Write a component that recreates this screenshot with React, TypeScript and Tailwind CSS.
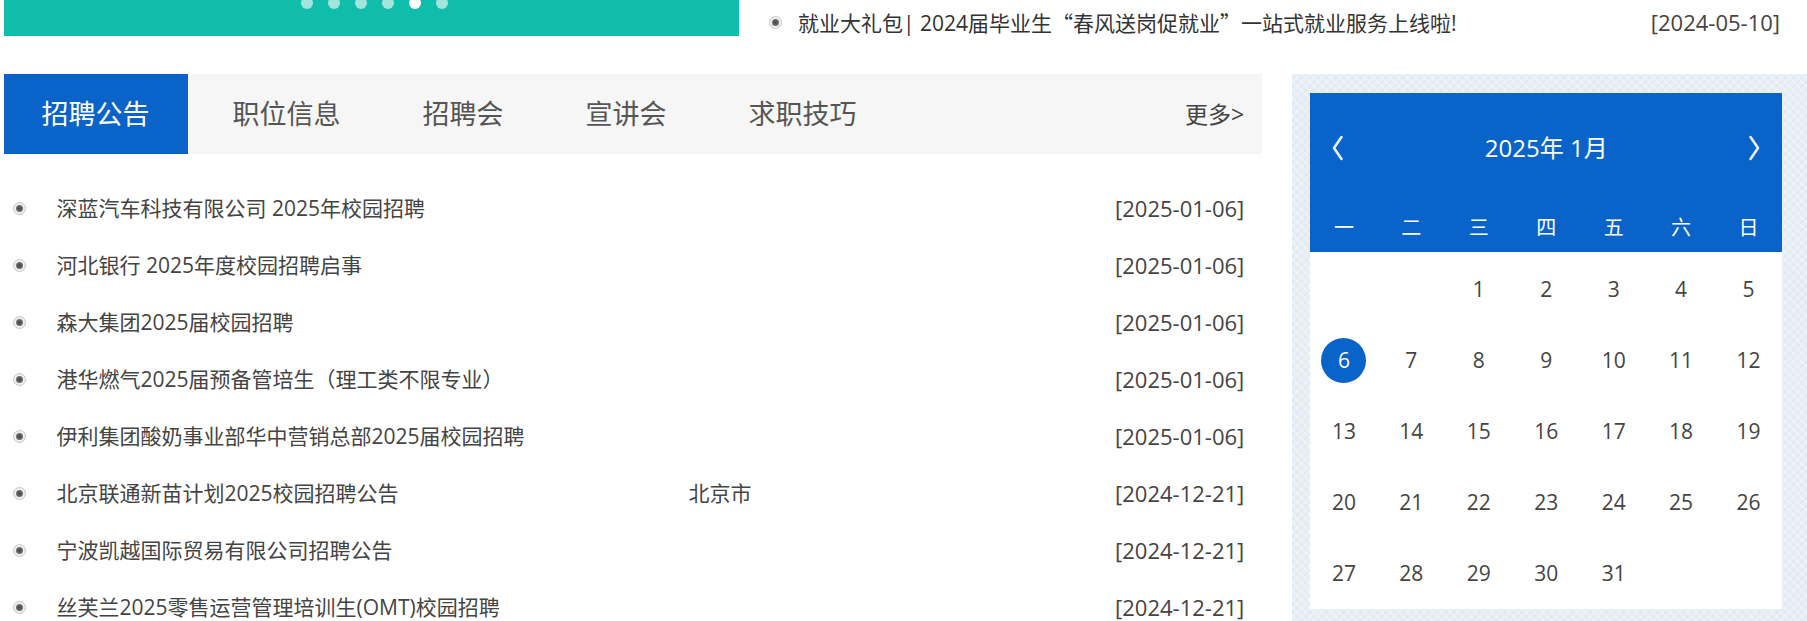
import React from "react";

const news = [
  { t: "深蓝汽车科技有限公司 2025年校园招聘", loc: "", d: "[2025-01-06]" },
  { t: "河北银行 2025年度校园招聘启事", loc: "", d: "[2025-01-06]" },
  { t: "森大集团2025届校园招聘", loc: "", d: "[2025-01-06]" },
  { t: "港华燃气2025届预备管培生（理工类不限专业）", loc: "", d: "[2025-01-06]" },
  { t: "伊利集团酸奶事业部华中营销总部2025届校园招聘", loc: "", d: "[2025-01-06]" },
  { t: "北京联通新苗计划2025校园招聘公告", loc: "北京市", d: "[2024-12-21]" },
  { t: "宁波凯越国际贸易有限公司招聘公告", loc: "", d: "[2024-12-21]" },
  { t: "丝芙兰2025零售运营管理培训生(OMT)校园招聘", loc: "", d: "[2024-12-21]" },
];

const weeks: (number | null)[][] = [
  [null, null, 1, 2, 3, 4, 5],
  [6, 7, 8, 9, 10, 11, 12],
  [13, 14, 15, 16, 17, 18, 19],
  [20, 21, 22, 23, 24, 25, 26],
  [27, 28, 29, 30, 31, null, null],
];

function Bullet() {
  return (
    <span className="flex h-[13px] w-[13px] shrink-0 items-center justify-center rounded-full border border-[#c8c8c8] bg-[#efefef]">
      <span className="h-[7px] w-[7px] rounded-full bg-[radial-gradient(circle,#444_0%,#666_55%,#999_100%)]" />
    </span>
  );
}

export default function App() {
  return (
    <div className="relative h-[621px] w-[1807px] overflow-hidden bg-white font-['Open_Sans','Noto_Sans_CJK_SC',sans-serif] text-[#333]">
      {/* top row */}
      <div className="flex h-[74px]">
        <div className="relative ml-[4px] h-[36px] w-[735px] bg-[#10bdaa]">
          <div className="absolute left-[297px] top-[-3px] flex gap-[15px]">
            <span className="h-[12px] w-[12px] rounded-full bg-[#a0e4db]" />
            <span className="h-[12px] w-[12px] rounded-full bg-[#a0e4db]" />
            <span className="h-[12px] w-[12px] rounded-full bg-[#a0e4db]" />
            <span className="h-[12px] w-[12px] rounded-full bg-[#a0e4db]" />
            <span className="h-[12px] w-[12px] rounded-full bg-white" />
            <span className="h-[12px] w-[12px] rounded-full bg-[#a0e4db]" />
          </div>
        </div>
        <div className="ml-[30px] flex h-[44px] w-[1011px] items-center">
          <Bullet />
          <span className="ml-[16px] text-[21px] leading-[44px] text-[#333]">
            就业大礼包| 2024届毕业生<span className="font-['Noto_Sans_CJK_SC',sans-serif]">“</span>春风送岗促就业<span className="font-['Noto_Sans_CJK_SC',sans-serif]">”</span>一站式就业服务上线啦!
          </span>
          <span className="ml-auto text-[22px] leading-[44px] text-[#444]">[2024-05-10]</span>
        </div>
      </div>

      {/* main */}
      <div className="flex">
        {/* left column */}
        <div className="ml-[3.5px] w-[1272px]">
          <div className="flex h-[80px] items-center bg-[#f6f6f6]">
            <div className="flex h-full items-center bg-[#0a63c9] px-[38px] text-[27px] text-white">招聘公告</div>
            <div className="flex h-full items-center pl-[45px] pr-[41px] text-[27px] text-[#555]">职位信息</div>
            <div className="flex h-full items-center px-[41px] text-[27px] text-[#555]">招聘会</div>
            <div className="flex h-full items-center px-[41px] text-[27px] text-[#555]">宣讲会</div>
            <div className="flex h-full items-center px-[41px] text-[27px] text-[#555]">求职技巧</div>
            <div className="ml-auto pr-[18px] text-[23px] text-[#444]">更多&gt;</div>
          </div>
          <div className="pt-[26px]">
            {news.map((n, i) => (
              <div key={i} className="flex h-[57px] items-center pr-[18px]">
                <span className="ml-[9px]">
                  <Bullet />
                </span>
                <span className="ml-[31px] w-[632px] shrink-0 text-[21px] text-[#444]">{n.t}</span>
                <span className="text-[21px] text-[#444]">{n.loc}</span>
                <span className="ml-auto text-[22px] text-[#444]">{n.d}</span>
              </div>
            ))}
          </div>
        </div>

        {/* right column: calendar */}
        <div className="ml-[30px] h-[560px] w-[520px] bg-[#e8eef5] pl-[18px] pt-[19px] [background-image:repeating-linear-gradient(45deg,rgba(255,255,255,0.3)_0px,rgba(255,255,255,0.3)_2px,transparent_2px,transparent_6px),repeating-linear-gradient(-45deg,rgba(210,220,232,0.3)_0px,rgba(210,220,232,0.3)_2px,transparent_2px,transparent_6px)]">
          <div className="w-[472px] bg-white">
            <div className="bg-[#0a63c9] text-white">
              <div className="flex h-[110px] items-center justify-between px-[21px]">
                <svg width="13" height="26" viewBox="0 0 13 26" fill="none">
                  <path d="M10.5 2 L3 13 L10.5 24" stroke="#e6eefb" strokeWidth="2.6" strokeLinecap="round" strokeLinejoin="round" />
                </svg>
                <span className="text-[24px]">2025年 1月</span>
                <svg width="13" height="26" viewBox="0 0 13 26" fill="none">
                  <path d="M2.5 2 L10 13 L2.5 24" stroke="#e6eefb" strokeWidth="2.6" strokeLinecap="round" strokeLinejoin="round" />
                </svg>
              </div>
              <div className="grid h-[49px] grid-cols-7 text-[20px]">
                {["一", "二", "三", "四", "五", "六", "日"].map((w) => (
                  <div key={w} className="flex items-center justify-center">{w}</div>
                ))}
              </div>
            </div>
            <div className="pt-[2px]">
              {weeks.map((row, ri) => (
                <div key={ri} className="grid h-[71px] grid-cols-7">
                  {row.map((d, di) => (
                    <div key={di} className="flex items-center justify-center text-[21px] text-[#444]">
                      {d === 6 ? (
                        <span className="flex h-[45px] w-[45px] items-center justify-center rounded-full bg-[#0a63c9] text-white">6</span>
                      ) : (
                        d ?? ""
                      )}
                    </div>
                  ))}
                </div>
              ))}
            </div>
          </div>
        </div>
      </div>
    </div>
  );
}
